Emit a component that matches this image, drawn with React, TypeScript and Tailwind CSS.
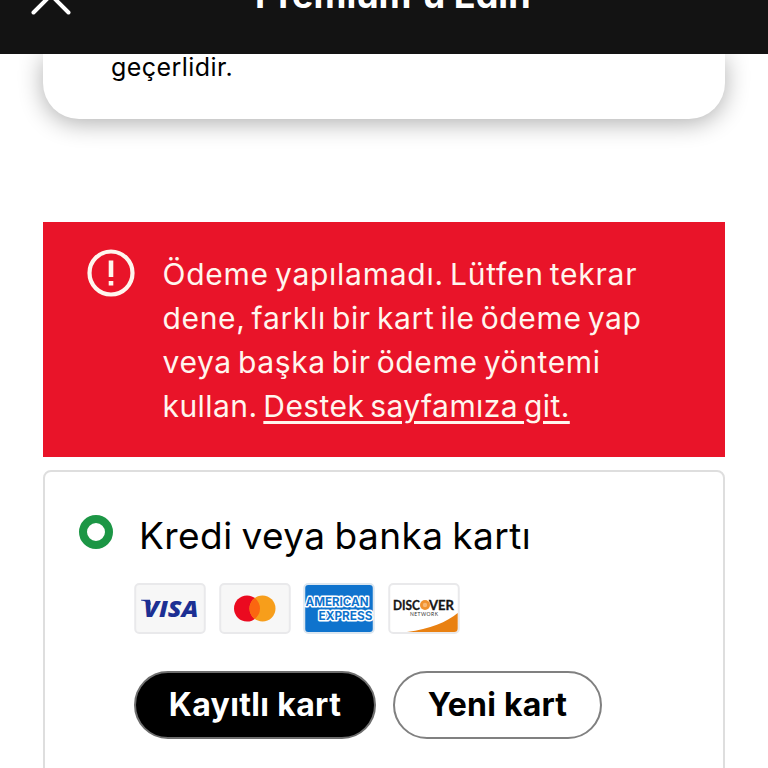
import React from "react";

const bannerLines = [
  { text: "Ödeme yapılamadı. Lütfen tekrar", cls: "tracking-[0.740px]" },
  { text: "dene, farklı bir kart ile ödeme yap", cls: "tracking-[0.660px]" },
  { text: "veya başka bir ödeme yöntemi", cls: "tracking-[0.640px]" },
];

function Visa() {
  return (
    <svg width="72" height="51" viewBox="0 0 72 51">
      <rect x="1.250" y="1" width="69.500" height="49" rx="4" fill="#f7f7f7" stroke="#e9e9eb" strokeWidth="2" />
      <text x="9.500" y="33.500" fontFamily="Open Sans, sans-serif" fontWeight="800" fontStyle="italic" fontSize="23.500" fill="#1c2f93" textLength="55" lengthAdjust="spacingAndGlyphs">VISA</text>
      <path d="M7 16.800h9l1 5.500c-2.500-3-6-4.300-10-4.800z" fill="#1c2f93" />
    </svg>
  );
}

function Mastercard() {
  return (
    <svg width="72" height="51" viewBox="0 0 72 51">
      <rect x="1.250" y="1" width="69.500" height="49" rx="4" fill="#f7f7f7" stroke="#e9e9eb" strokeWidth="2" />
      <circle cx="28" cy="25.500" r="13" fill="#eb0a20" />
      <circle cx="43.500" cy="25.500" r="13" fill="#f79e1b" />
      <path d="M35.750 15.060a13 13 0 0 1 0 20.880a13 13 0 0 1 0-20.880z" fill="#fb6610" />
    </svg>
  );
}

function Amex() {
  return (
    <svg width="72" height="51" viewBox="0 0 72 51">
      <rect x="1.250" y="1" width="69.500" height="49" rx="4" fill="#0f73cd" stroke="#dce6ef" strokeWidth="2" />
      <g fontFamily="Inter, sans-serif" fontWeight="700" fontSize="11.500" fill="#0f73cd" stroke="#fff" strokeWidth="2.800" paintOrder="stroke" strokeLinejoin="round">
        <text x="2.500" y="22.500" textLength="63" lengthAdjust="spacingAndGlyphs">AMERICAN</text>
        <text x="15.500" y="36.500" textLength="54" lengthAdjust="spacingAndGlyphs">EXPRESS</text>
      </g>
    </svg>
  );
}

function Discover() {
  return (
    <svg width="72" height="51" viewBox="0 0 72 51">
      <rect x="1.250" y="1" width="69.500" height="49" rx="4" fill="#fff" stroke="#e9e9eb" strokeWidth="2" />
      <path d="M19 49C42 46 59 39 69.700 30v15.500a3.500 3.500 0 0 1-3.500 3.500z" fill="#e98112" />
      <g fontFamily="Lato, sans-serif" fontWeight="700" fontSize="12.500" fill="#161616" stroke="#161616" strokeWidth="0.300">
        <text x="5" y="26.500" textLength="27" lengthAdjust="spacingAndGlyphs">DISC</text>
        <text x="41" y="26.500" textLength="25" lengthAdjust="spacingAndGlyphs">VER</text>
      </g>
      <circle cx="37" cy="22" r="5" fill="#f0922e" />
      <circle cx="37" cy="22" r="2.200" fill="#f8b873" />
      <text x="22" y="33" fontFamily="Lato, sans-serif" fontSize="5" fill="#333" textLength="28">NETWORK</text>
    </svg>
  );
}

export default function App() {
  return (
    <div className="h-[768px] w-[768px] overflow-hidden bg-white font-['Inter',sans-serif] text-black">
      <header className="relative z-10 flex h-[54px] items-start overflow-hidden bg-[#131313] text-white">
        <svg className="-mt-[23px] ml-[31px] h-[40px] w-[40px] shrink-0" viewBox="0 0 40 40" fill="none" stroke="#fff" strokeWidth="4" strokeLinecap="round">
          <path d="M2.500 0.500L37.500 35.500M37.500 0.500L2.500 35.500" />
        </svg>
        <h1 className="-mt-[29px] ml-[184px] whitespace-nowrap text-[36px] leading-[48px] font-bold">Premium&apos;u Edin</h1>
      </header>

      <section className="mx-[43px] h-[65px] rounded-b-[36px] bg-white pl-[68px] shadow-[0_4px_24px_rgba(0,0,0,0.32)]">
        <p className="text-[25px] leading-[26px] tracking-[0.450px]">geçerlidir.</p>
      </section>

      <section className="mx-[43px] mt-[103px] flex h-[235px] bg-[#e91429] pt-[27px] pl-[44px] text-[#fff6ee]">
        <svg className="h-[48px] w-[48px] shrink-0" viewBox="0 0 48 48" fill="none">
          <circle cx="24" cy="24" r="21.500" stroke="currentColor" strokeWidth="4.200" />
          <path d="M21.700 11.500h4.600v16.500h-4.600zM21.700 32h4.600v4.600h-4.600z" fill="currentColor" />
        </svg>
        <div className="ml-[27.500px] pt-[3px] text-[30px] leading-[44px] whitespace-nowrap [word-spacing:-3px]">
          {bannerLines.map((line) => (
            <div key={line.text}><span className={line.cls}>{line.text}</span></div>
          ))}
          <div className="tracking-[0.430px]">
            kullan. <a className="underline decoration-[2.500px] underline-offset-[4px]">Destek sayfamıza git.</a>
          </div>
        </div>
      </section>

      <section className="mx-[43px] mt-[13px] h-[320px] rounded-[8px] border-2 border-[#dedede] pl-[34px]">
        <div className="flex h-[120px] items-center">
          <div className="h-[34px] w-[34px] rounded-full border-[8.500px] border-[#1c9645]" />
          <h2 className="ml-[26px] whitespace-nowrap pt-[8px] text-[37px] leading-[48px] tracking-[0.450px] [word-spacing:-2px]">Kredi veya banka kartı</h2>
        </div>
        <div className="-mt-[9px] ml-[55px] flex gap-[12.500px]">
          <Visa />
          <Mastercard />
          <Amex />
          <Discover />
        </div>
        <div className="mt-[37px] ml-[55px] flex gap-[17px] text-[32px] font-bold">
          <button className="h-[68px] w-[242px] rounded-full border-2 border-[#6e6e6e] bg-black pb-[1px] tracking-[0.350px] whitespace-nowrap text-white">Kayıtlı kart</button>
          <button className="h-[68px] w-[209px] rounded-full border-2 border-[#808080] bg-white pb-[1px] tracking-[0.200px] whitespace-nowrap">Yeni kart</button>
        </div>
      </section>
    </div>
  );
}
